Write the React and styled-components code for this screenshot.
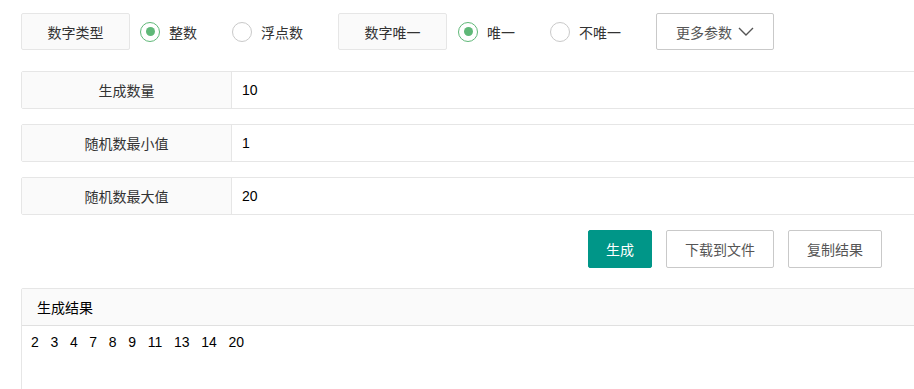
import React from 'react'
import styled, { createGlobalStyle } from 'styled-components'

const GlobalStyle = createGlobalStyle`
  body {
    margin: 0;
    background: #fff;
    overflow: hidden;
    font-family: "Liberation Sans", "Noto Sans CJK SC", sans-serif;
    font-size: 14px;
    color: #333;
  }
`

const Page = styled.div`
  padding: 13px 0 0 21px;
  width: 1100px;
`

const TopBar = styled.div`
  display: flex;
  align-items: center;
  height: 37px;
`

const OptionLabel = styled.div`
  box-sizing: border-box;
  width: 109px;
  height: 37px;
  display: flex;
  align-items: center;
  justify-content: center;
  background: #fafafa;
  border: 1px solid #e6e6e6;
  border-radius: 2px;
  margin-right: ${(p) => p.$gap || 10}px;
`

const Radio = styled.div`
  display: flex;
  align-items: center;
  gap: 9px;
  margin-right: 35px;
  cursor: pointer;
`

const Circle = styled.span`
  box-sizing: border-box;
  width: 20px;
  height: 20px;
  border-radius: 50%;
  border: 1.5px solid ${(p) => (p.$on ? '#5fb878' : '#c9c9c9')};
  display: flex;
  align-items: center;
  justify-content: center;

  &::after {
    content: '';
    display: ${(p) => (p.$on ? 'block' : 'none')};
    width: 9px;
    height: 9px;
    border-radius: 50%;
    background: #5fb878;
  }
`

const MoreButton = styled.button`
  box-sizing: border-box;
  height: 37px;
  width: 118px;
  border: 1px solid #c9c9c9;
  border-radius: 2px;
  background: #fff;
  color: #555;
  font: inherit;
  display: flex;
  align-items: center;
  justify-content: center;
  gap: 6px;
  padding: 0;
`

const Fields = styled.div`
  margin-top: 21px;
  display: flex;
  flex-direction: column;
  gap: 15px;
`

const FieldRow = styled.div`
  display: flex;
  height: 38px;
  box-sizing: border-box;
  border: 1px solid #e6e6e6;
  border-radius: 2px;
`

const FieldLabel = styled.div`
  width: 209px;
  flex-shrink: 0;
  background: #fafafa;
  border-right: 1px solid #e6e6e6;
  display: flex;
  align-items: center;
  justify-content: center;
`

const FieldInput = styled.input`
  flex: 1;
  border: none;
  outline: none;
  padding: 0 10px;
  font: inherit;
  color: #000;
  background: #fff;
`

const Actions = styled.div`
  width: 861px;
  margin-top: 15px;
  display: flex;
  justify-content: flex-end;
  gap: 14px;
`

const Button = styled.button`
  box-sizing: border-box;
  height: 38px;
  padding: 0 ${(p) => (p.$primary ? 17 : 18)}px;
  border-radius: 2px;
  font: inherit;
  cursor: pointer;
  border: 1px solid ${(p) => (p.$primary ? '#009688' : '#c9c9c9')};
  background: ${(p) => (p.$primary ? '#009688' : '#fff')};
  color: ${(p) => (p.$primary ? '#fff' : '#555')};
`

const Result = styled.div`
  margin-top: 20px;
  border: 1px solid #e6e6e6;
  border-radius: 2px;
  height: 200px;
`

const ResultHeader = styled.div`
  height: 36px;
  display: flex;
  align-items: center;
  padding-left: 15px;
  background: #fafafa;
  border-bottom: 1px solid #e0e0e0;
  color: #000;
`

const ResultBody = styled.div`
  padding: 6px 9px;
  white-space: pre;
  color: #000;
  line-height: 20px;
`

const Chevron = () => (
  <svg width="16" height="9" viewBox="0 0 16 9">
    <path d="M1 1 L8 8 L15 1" fill="none" stroke="#555" strokeWidth="1.4" />
  </svg>
)

const fields = [
  ['生成数量', '10'],
  ['随机数最小值', '1'],
  ['随机数最大值', '20'],
]

const numbers = [2, 3, 4, 7, 8, 9, 11, 13, 14, 20]

export default function App() {
  return (
    <Page>
      <GlobalStyle />
      <TopBar>
        <OptionLabel>数字类型</OptionLabel>
        <Radio><Circle $on />整数</Radio>
        <Radio><Circle />浮点数</Radio>
        <OptionLabel $gap={11}>数字唯一</OptionLabel>
        <Radio><Circle $on />唯一</Radio>
        <Radio><Circle />不唯一</Radio>
        <MoreButton>更多参数 <Chevron /></MoreButton>
      </TopBar>

      <Fields>
        {fields.map(([label, value]) => (
          <FieldRow key={label}>
            <FieldLabel>{label}</FieldLabel>
            <FieldInput defaultValue={value} />
          </FieldRow>
        ))}
      </Fields>

      <Actions>
        <Button $primary>生成</Button>
        <Button>下载到文件</Button>
        <Button>复制结果</Button>
      </Actions>

      <Result>
        <ResultHeader>生成结果</ResultHeader>
        <ResultBody>{numbers.join('   ')}</ResultBody>
      </Result>
    </Page>
  )
}
